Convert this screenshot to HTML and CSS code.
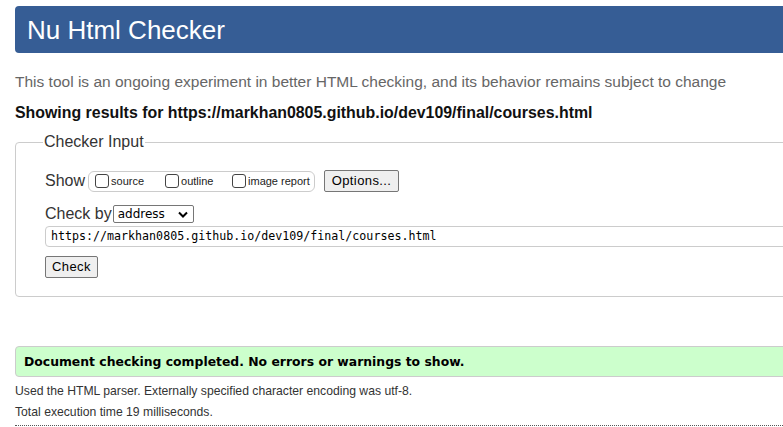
FILE: index.html
```html
<!DOCTYPE html>
<html>
<head>
<meta charset="utf-8">
<link rel="stylesheet" href="styles.css">
</head>
<body>
<div class="page">
  <h1 class="header">Nu Html Checker</h1>
  <p class="intro">This tool is an ongoing experiment in better HTML checking, and its behavior remains subject to change</p>
  <p class="showing">Showing results for https://markhan0805.github.io/dev109/final/courses.html</p>
  <fieldset class="checker">
    <legend class="checker-legend">Checker Input</legend>
    <div class="row show-row">
      <span class="lbl">Show</span>
      <fieldset class="show-box">
        <label class="opt"><span class="cb"></span>source</label>
        <label class="opt"><span class="cb"></span>outline</label>
        <label class="opt"><span class="cb"></span>image report</label>
      </fieldset>
      <span class="btn options">Options...</span>
    </div>
    <div class="row by-row">
      <span class="lbl">Check by</span>
      <span class="select">address<svg class="chev" width="10" height="7" viewBox="0 0 10 7"><path d="M1 1.5 L5 5.5 L9 1.5" fill="none" stroke="#000" stroke-width="2"/></svg></span>
    </div>
    <div class="url">https://markhan0805.github.io/dev109/final/courses.html</div>
    <span class="btn check">Check</span>
  </fieldset>
  <div class="success">Document checking completed. No errors or warnings to show.</div>
  <p class="meta">Used the HTML parser. Externally specified character encoding was utf-8.</p>
  <p class="meta">Total execution time 19 milliseconds.</p>
  <div class="dots"></div>
</div>
</body>
</html>
```
FILE: styles.css
```css
html, body {
  margin: 0;
  padding: 0;
  overflow: hidden;
  background: #fff;
}
body {
  font-family: "Liberation Sans", Arial, sans-serif;
  color: #000;
}
.page {
  width: 900px;
  padding: 6px 0 0 15px;
}
.header {
  margin: 0;
  height: 47px;
  box-sizing: border-box;
  background: #365d95;
  color: #fff;
  border-radius: 4px;
  font-size: 26px;
  font-weight: normal;
  line-height: 48px;
  padding-left: 12px;
}
.intro {
  margin: 20px 0 0;
  font-size: 15.5px;
  line-height: 18px;
  color: #666;
}
.showing {
  margin: 13px 0 0;
  font-size: 15.9px;
  line-height: 18px;
  font-weight: bold;
  color: #111;
}
.checker {
  margin: 11px 0 0;
  padding: 18px 29px 18px 29px;
  border: 1px solid #ccc;
  border-radius: 4px;
  min-width: 0;
}
.checker-legend {
  padding: 0 1px;
  margin-left: -2px;
  font-size: 16px;
  color: #333;
}
.row {
  display: flex;
  align-items: center;
}
.lbl {
  font-size: 16px;
  color: #333;
}
.show-row {
  height: 24px;
}
.show-box {
  display: flex;
  align-items: center;
  margin: 0 0 0 3px;
  padding: 0 0 0 6px;
  height: 21px;
  box-sizing: border-box;
  border: 1px solid #ccc;
  border-radius: 6px;
  width: 227px;
  min-width: 0;
}
.opt {
  display: flex;
  align-items: center;
  font-size: 11px;
  color: #222;
}
.opt:nth-child(1) { width: 70px; }
.opt:nth-child(2) { width: 67px; }
.cb {
  width: 12px;
  height: 12px;
  border: 1px solid #444;
  border-radius: 3px;
  margin-right: 2px;
}
.btn {
  display: inline-block;
  box-sizing: border-box;
  border: 1px solid #767676;
  border-radius: 2px;
  background: #efefef;
  font-size: 13px;
  color: #000;
  text-align: center;
  letter-spacing: 0.4px;
}
.options {
  margin-left: 9px;
  width: 75px;
  height: 22px;
  line-height: 20px;
}
.by-row {
  margin-top: 11px;
  height: 20px;
}
.select {
  margin-left: 1px;
  width: 81px;
  height: 18px;
  box-sizing: border-box;
  border: 1px solid #767676;
  border-radius: 2px;
  font-family: "DejaVu Sans", sans-serif;
  font-size: 12px;
  line-height: 16px;
  padding-left: 4px;
  display: flex;
  align-items: center;
  justify-content: space-between;
  padding-right: 5px;
}
.url {
  margin-top: 2px;
  height: 21px;
  box-sizing: border-box;
  border: 1px solid #ccc;
  border-radius: 4px;
  font-family: "DejaVu Sans Mono", monospace;
  font-size: 11.65px;
  line-height: 19px;
  padding-left: 5px;
  margin-right: -200px;
}
.check {
  margin-top: 9px;
  width: 53px;
  height: 22px;
  line-height: 20px;
}
.success {
  margin-top: 49px;
  height: 31px;
  box-sizing: border-box;
  background: #ccffcc;
  border: 1px solid #ccc;
  border-radius: 4px;
  font-family: "DejaVu Sans", Verdana, sans-serif;
  font-weight: bold;
  font-size: 12.4px;
  line-height: 29px;
  padding-left: 8px;
}
.meta {
  margin: 7px 0 0;
  font-size: 12.2px;
  line-height: 14px;
  color: #333;
}
.meta + .meta {
  margin-top: 7px;
}
.dots {
  margin-top: 6px;
  border-top: 1px dotted #555;
}
```
